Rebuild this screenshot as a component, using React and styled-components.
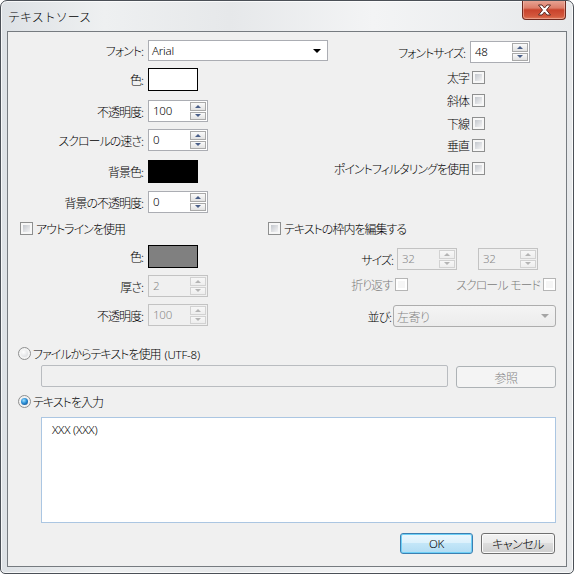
import styled, { createGlobalStyle } from "styled-components";

const GlobalStyle = createGlobalStyle`
  html, body {
    margin: 0;
    padding: 0;
    background: #ffffff;
  }
  body {
    font-family: "Noto Sans CJK JP", "Liberation Sans", sans-serif;
    font-size: 12px;
    font-weight: 300;
    color: #000000;
    font-feature-settings: "palt" 1;
  }
  * {
    box-sizing: border-box;
  }
`;

const Window = styled.div`
  width: 574px;
  height: 574px;
  border: 1px solid #4b5057;
  border-radius: 7px 7px 5px 5px;
  background: linear-gradient(
    to right,
    #dde1e5 0%,
    #eef0f1 18%,
    #e6e8ea 40%,
    #f3f4f5 65%,
    #e7e9eb 100%
  );
  box-shadow: inset 0 0 0 1px rgba(255, 255, 255, 0.75);
  display: flex;
  flex-direction: column;
  overflow: hidden;
`;

const TitleBar = styled.div`
  height: 30px;
  display: flex;
  align-items: center;
  justify-content: space-between;
  padding-left: 7px;
  flex-shrink: 0;
`;

const Title = styled.span`
  font-size: 12px;
  font-feature-settings: normal;
  color: #000000;
  margin-top: 1px;
`;

const CloseButton = styled.div`
  align-self: flex-start;
  margin-top: -1px;
  margin-right: 7px;
  width: 44px;
  height: 20px;
  border: 1px solid #6f2a1f;
  border-top: none;
  border-radius: 0 0 4px 4px;
  background: linear-gradient(
    #e9a898 0%,
    #dc7d69 42%,
    #c9432c 52%,
    #d3583d 85%,
    #de7a5a 100%
  );
  box-shadow: inset 0 0 0 1px rgba(255, 210, 200, 0.45);
  display: flex;
  align-items: center;
  justify-content: center;
`;

const Client = styled.div`
  margin: 0 6px;
  height: 536px;
  border: 1px solid #767b80;
  background: #f0f0f0;
  display: flex;
  flex-direction: column;
`;

const TopSection = styled.div`
  display: flex;
  margin-top: 8px;
`;

const LeftCol = styled.div`
  width: 282px;
  display: flex;
  flex-direction: column;
`;

const RightCol = styled.div`
  flex: 1;
  display: flex;
  flex-direction: column;
`;

const FieldRow = styled.div`
  display: flex;
  align-items: center;
  height: ${(p) => p.$h}px;
  margin-top: ${(p) => p.$top || 0}px;
  padding-left: ${(p) => p.$pl || 0}px;
  padding-right: ${(p) => p.$pr || 0}px;
`;

const Label = styled.span`
  width: ${(p) => p.$w}px;
  padding-right: ${(p) => (p.$pr === undefined ? 5 : p.$pr)}px;
  text-align: right;
  white-space: nowrap;
  flex-shrink: 0;
  letter-spacing: -1px;
  color: ${(p) => (p.$disabled ? "#7c7c7c" : "#000000")};
`;

const InlineLabel = styled.span`
  white-space: nowrap;
  letter-spacing: -1px;
  margin-left: ${(p) => p.$ml || 0}px;
  margin-right: ${(p) => p.$mr || 0}px;
  color: ${(p) => (p.$disabled ? "#7c7c7c" : "#000000")};
`;

const Latin = styled.span`
  font-family: "Noto Sans", "Liberation Sans", sans-serif;
  font-weight: 300;
  font-size: 11.5px;
  letter-spacing: -0.2px;
  margin-left: ${(p) => p.$ml || 0}px;
`;

const ComboBox = styled.div`
  width: ${(p) => (p.$w ? `${p.$w}px` : "auto")};
  flex: ${(p) => (p.$w ? "none" : 1)};
  height: ${(p) => p.$h || 21}px;
  border: 1px solid ${(p) => (p.$disabled ? "#adadad" : "#abadb3")};
  border-radius: ${(p) => (p.$disabled ? 3 : 0)}px;
  background: ${(p) =>
    p.$disabled ? "linear-gradient(#f4f4f4, #ececec)" : "#ffffff"};
  color: ${(p) => (p.$disabled ? "#838383" : "#000000")};
  letter-spacing: -0.5px;
  display: flex;
  align-items: center;
  justify-content: space-between;
  padding: 0 6px 0 3px;
`;

const ComboArrow = styled.span`
  width: 0;
  height: 0;
  border-left: 4px solid transparent;
  border-right: 4px solid transparent;
  border-top: 4px solid ${(p) => (p.$disabled ? "#a5a5a5" : "#000000")};
`;

const Swatch = styled.div`
  width: 50px;
  height: 23px;
  border: 1px solid #000000;
  background: ${(p) => p.$color};
`;

const SpinWrap = styled.div`
  width: 60px;
  height: 22px;
  margin-left: ${(p) => p.$ml || 0}px;
  border: 1px solid ${(p) => (p.$disabled ? "#c3c3c3" : "#abadb3")};
  background: ${(p) => (p.$disabled ? "#f0f0f0" : "#ffffff")};
  display: flex;
`;

const SpinText = styled.span`
  flex: 1;
  padding-left: 4px;
  line-height: 20px;
  font-family: "Noto Sans", "Liberation Sans", sans-serif;
  font-weight: 300;
  font-size: 11.5px;
  letter-spacing: -0.2px;
  color: ${(p) => (p.$disabled ? "#8a8a8a" : "#000000")};
`;

const SpinButtons = styled.div`
  width: 17px;
  display: flex;
  flex-direction: column;
  gap: 1px;
  padding: 1px 1px 1px 0;
`;

const SpinButton = styled.div`
  flex: 1;
  border: 1px solid ${(p) => (p.$disabled ? "#d2d2d2" : "#a9a9a9")};
  background: ${(p) =>
    p.$disabled
      ? "linear-gradient(#f7f7f7, #eeeeee)"
      : "linear-gradient(#fafafa, #e2e2e2)"};
  display: flex;
  align-items: center;
  justify-content: center;
`;

const SpinArrow = styled.span`
  width: 0;
  height: 0;
  border-left: 3px solid transparent;
  border-right: 3px solid transparent;
  ${(p) =>
    p.$up
      ? `border-bottom: 3px solid ${p.$disabled ? "#b4b4b4" : "#4a5f88"};`
      : `border-top: 3px solid ${p.$disabled ? "#b4b4b4" : "#4a5f88"};`}
`;

const CheckBox = styled.span`
  width: 13px;
  height: 13px;
  flex-shrink: 0;
  margin-left: ${(p) => p.$ml || 0}px;
  padding: 2px;
  border: 1px solid ${(p) => (p.$disabled ? "#b5b5b5" : "#8e8f8f")};
  background: ${(p) =>
    p.$disabled
      ? "linear-gradient(#f6f6f6, #f6f6f6) content-box, #ffffff"
      : "linear-gradient(135deg, #c3c7cd, #f3f3f4) content-box, #f7f7f7"};
`;

const Radio = styled.span`
  width: 13px;
  height: 13px;
  flex-shrink: 0;
  border-radius: 50%;
  padding: 2px;
  border: 1px solid #8e8f8f;
  background: ${(p) =>
    p.$checked
      ? "radial-gradient(circle at 40% 35%, #9fe0ff 0%, #2b8fd6 45%, #0d3c78 100%) content-box, #f2f2f2"
      : "radial-gradient(circle at 35% 30%, #ffffff 0%, #d6d8db 100%) content-box, #f4f4f4"};
  background-clip: content-box, border-box;
`;

const Section = styled.div`
  display: flex;
  margin-top: ${(p) => p.$top || 0}px;
`;

const Group = styled.div`
  width: ${(p) => (p.$w ? `${p.$w}px` : "auto")};
  flex: ${(p) => (p.$w ? "none" : 1)};
  display: flex;
  flex-direction: column;
`;

const Spacer = styled.span`
  flex: 1;
`;

const BottomSection = styled.div`
  display: flex;
  flex-direction: column;
  padding: 0 10px;
`;

const FileRow = styled.div`
  display: flex;
  align-items: flex-start;
  height: 23px;
  margin-top: 5px;
  padding-left: 23px;
`;

const FileField = styled.div`
  flex: 1;
  height: 22px;
  border: 1px solid #b9bcc0;
  border-radius: 2px;
  background: #f0f0f0;
`;

const PushButton = styled.div`
  width: ${(p) => p.$w}px;
  height: ${(p) => p.$h || 21}px;
  margin-top: ${(p) => p.$top || 0}px;
  margin-left: ${(p) => p.$ml || 0}px;
  border-radius: 3px;
  display: flex;
  align-items: center;
  justify-content: center;
  font-size: 12px;
  letter-spacing: -0.5px;
  border: 1px solid
    ${(p) =>
      p.$variant === "default"
        ? "#3c7fb1"
        : p.$variant === "disabled"
        ? "#adb2b5"
        : "#707070"};
  color: ${(p) => (p.$variant === "disabled" ? "#838383" : "#000000")};
  background: ${(p) =>
    p.$variant === "default"
      ? "linear-gradient(#ecf7fd 0%, #dcf1fc 45%, #c3e6f8 50%, #b1dcf3 100%)"
      : p.$variant === "disabled"
      ? "#f4f4f4"
      : "linear-gradient(#f3f3f3 0%, #ebebeb 45%, #dddddd 50%, #cfcfcf 100%)"};
  box-shadow: ${(p) =>
    p.$variant === "default"
      ? "inset 0 0 0 1px #6ed0f7"
      : p.$variant === "disabled"
      ? "none"
      : "inset 0 0 0 1px #fbfbfb"};
`;

const TextBox = styled.div`
  height: 106px;
  margin-top: 9px;
  margin-left: 23px;
  border: 1px solid #abc6e2;
  background: #ffffff;
  padding: 3px 10px;
  line-height: 16px;
  white-space: pre;
`;

const ButtonRow = styled.div`
  display: flex;
  justify-content: flex-end;
  gap: 8px;
  margin-top: 10px;
  padding-right: 1px;
`;

function Spin({ value, disabled, ml }) {
  return (
    <SpinWrap $disabled={disabled} $ml={ml}>
      <SpinText $disabled={disabled}>{value}</SpinText>
      <SpinButtons>
        <SpinButton $disabled={disabled}>
          <SpinArrow $up $disabled={disabled} />
        </SpinButton>
        <SpinButton $disabled={disabled}>
          <SpinArrow $disabled={disabled} />
        </SpinButton>
      </SpinButtons>
    </SpinWrap>
  );
}

function CloseGlyph() {
  return (
    <svg width="15" height="12" viewBox="0 0 15 12">
      <path
        d="M1.5 1 L5 1 L7.5 4 L10 1 L13.5 1 L9.5 6 L13.5 11 L10 11 L7.5 8 L5 11 L1.5 11 L5.5 6 Z"
        fill="#ffffff"
        stroke="#5a2a22"
        strokeWidth="1"
        strokeLinejoin="round"
      />
    </svg>
  );
}

const checkRows = [
  { label: "太字", top: 8 },
  { label: "斜体", top: 10 },
  { label: "下線", top: 10 },
  { label: "垂直", top: 9 },
  { label: "ポイントフィルタリングを使用", top: 10 },
];

export default function App() {
  return (
    <>
      <GlobalStyle />
      <Window>
        <TitleBar>
          <Title>テキストソース</Title>
          <CloseButton>
            <CloseGlyph />
          </CloseButton>
        </TitleBar>

        <Client>
          <TopSection>
            <LeftCol>
              <FieldRow $h={21}>
                <Label $w={140}>フォント:</Label>
                <ComboBox $w={180}>
                  <Latin>Arial</Latin>
                  <ComboArrow />
                </ComboBox>
              </FieldRow>
              <FieldRow $h={23} $top={7}>
                <Label $w={140}>色:</Label>
                <Swatch $color="#ffffff" />
              </FieldRow>
              <FieldRow $h={22} $top={9}>
                <Label $w={140}>不透明度:</Label>
                <Spin value="100" />
              </FieldRow>
              <FieldRow $h={22} $top={7}>
                <Label $w={140}>スクロールの速さ:</Label>
                <Spin value="0" />
              </FieldRow>
              <FieldRow $h={23} $top={9}>
                <Label $w={140}>背景色:</Label>
                <Swatch $color="#000000" />
              </FieldRow>
              <FieldRow $h={22} $top={8}>
                <Label $w={140}>背景の不透明度:</Label>
                <Spin value="0" />
              </FieldRow>
            </LeftCol>

            <RightCol>
              <FieldRow $h={22} $top={1}>
                <Label $w={180}>フォントサイズ:</Label>
                <Spin value="48" />
              </FieldRow>
              {checkRows.map((row) => (
                <FieldRow key={row.label} $h={13} $top={row.top}>
                  <Label $w={182} $pr={3}>
                    {row.label}
                  </Label>
                  <CheckBox />
                </FieldRow>
              ))}
            </RightCol>
          </TopSection>

          <Section $top={9}>
            <Group $w={252}>
              <FieldRow $h={13} $pl={12}>
                <CheckBox />
                <InlineLabel $ml={3}>アウトラインを使用</InlineLabel>
              </FieldRow>
              <FieldRow $h={23} $top={10}>
                <Label $w={140}>色:</Label>
                <Swatch $color="#808080" />
              </FieldRow>
              <FieldRow $h={22} $top={7}>
                <Label $w={140}>厚さ:</Label>
                <Spin value="2" disabled />
              </FieldRow>
              <FieldRow $h={22} $top={7}>
                <Label $w={140}>不透明度:</Label>
                <Spin value="100" disabled />
              </FieldRow>
            </Group>

            <Group>
              <FieldRow $h={13} $pl={8}>
                <CheckBox />
                <InlineLabel $ml={3}>テキストの枠内を編集する</InlineLabel>
              </FieldRow>
              <FieldRow $h={22} $top={13}>
                <Label $w={137} $pr={4}>
                  サイズ:
                </Label>
                <Spin value="32" disabled />
                <Spin value="32" disabled ml={21} />
              </FieldRow>
              <FieldRow $h={13} $top={8} $pr={10}>
                <Label $w={135} $pr={3} $disabled>
                  折り返す
                </Label>
                <CheckBox $disabled />
                <Spacer />
                <InlineLabel $disabled>
                  スクロール<Latin> </Latin>モード
                </InlineLabel>
                <CheckBox $disabled $ml={3} />
              </FieldRow>
              <FieldRow $h={22} $top={14} $pr={10}>
                <Label $w={133} $pr={2}>
                  並び:
                </Label>
                <ComboBox $h={22} $disabled>
                  左寄り
                  <ComboArrow $disabled />
                </ComboBox>
              </FieldRow>
            </Group>
          </Section>

          <BottomSection>
            <FieldRow $h={13} $top={20}>
              <Radio />
              <InlineLabel $ml={2}>
                ファイルからテキストを使用<Latin $ml={4}>(UTF-8)</Latin>
              </InlineLabel>
            </FieldRow>
            <FileRow>
              <FileField />
              <PushButton $w={100} $h={22} $top={1} $ml={8} $variant="disabled">
                参照
              </PushButton>
            </FileRow>
            <FieldRow $h={13} $top={7}>
              <Radio $checked />
              <InlineLabel $ml={2}>テキストを入力</InlineLabel>
            </FieldRow>
            <TextBox>
              <Latin>XXX (XXX)</Latin>
            </TextBox>
            <ButtonRow>
              <PushButton $w={73} $variant="default">
                <Latin>OK</Latin>
              </PushButton>
              <PushButton $w={74}>キャンセル</PushButton>
            </ButtonRow>
          </BottomSection>
        </Client>
      </Window>
    </>
  );
}
